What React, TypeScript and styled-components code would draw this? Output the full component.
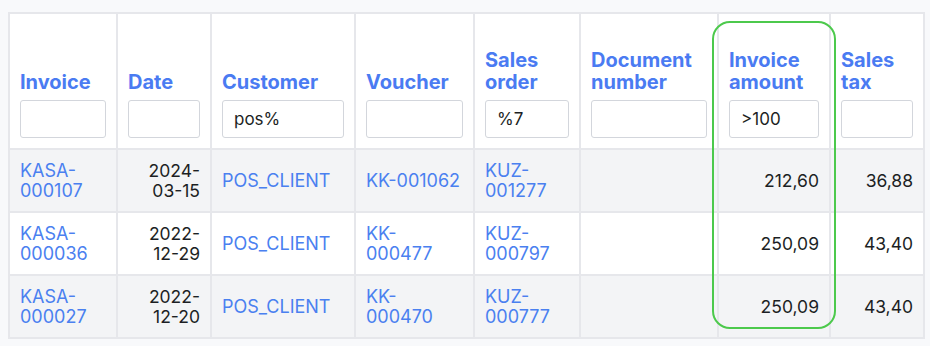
import styled, { createGlobalStyle } from 'styled-components';

const GlobalStyle = createGlobalStyle`
  * { box-sizing: border-box; }
  body {
    margin: 0;
    background: #f8f9fb;
    font-family: Inter, "Noto Sans", sans-serif;
    color: #1c1f24;
  }
`;

const Wrap = styled.div`
  position: relative;
  padding: 12px 0 0 8px;
`;

const Table = styled.table`
  border-collapse: separate;
  border-spacing: 2px;
  background: #e6e7eb;
  table-layout: fixed;
  width: 917px;
`;

const Th = styled.th`
  background: #fff;
  height: 134px;
  padding: 0 10px 10px;
  vertical-align: bottom;
  text-align: left;
  font-weight: normal;
`;

const Label = styled.div`
  color: #4a7bf2;
  font-size: 20px;
  font-weight: 700;
  line-height: 22px;
  margin-bottom: 7px;
`;

const Filter = styled.input`
  display: block;
  width: 100%;
  height: 38px;
  border: 1px solid #d3d6dc;
  border-radius: 3px;
  background: #fff;
  padding: 0 11px;
  font-family: inherit;
  font-size: 17px;
  color: #1c1f24;
  outline: none;
`;

const Row = styled.tr<{ $shaded: boolean }>`
  height: 61px;
  background: ${(p) => (p.$shaded ? '#f3f4f6' : '#ffffff')};
`;

const Td = styled.td<{ $right?: boolean }>`
  padding: 0 10px;
  vertical-align: middle;
  text-align: ${(p) => (p.$right ? 'right' : 'left')};
  font-size: 17.5px;
  line-height: 20px;
  white-space: nowrap;
`;

const Link = styled.a`
  color: #4a80f0;
  font-size: 18px;
  text-decoration: none;
  cursor: pointer;
`;

const Highlight = styled.div`
  position: absolute;
  left: 712px;
  top: 21px;
  width: 124px;
  height: 308px;
  border: 2px solid #4cc94c;
  border-radius: 18px;
  pointer-events: none;
`;

type Col = { key: string; label: string[]; width: number; filter: string; right?: boolean; link?: boolean };

const columns: Col[] = [
  { key: 'invoice', label: ['Invoice'], width: 106, filter: '', link: true },
  { key: 'date', label: ['Date'], width: 92, filter: '', right: true },
  { key: 'customer', label: ['Customer'], width: 142, filter: 'pos%', link: true },
  { key: 'voucher', label: ['Voucher'], width: 117, filter: '', link: true },
  { key: 'order', label: ['Sales', 'order'], width: 104, filter: '%7', link: true },
  { key: 'doc', label: ['Document', 'number'], width: 136, filter: '' },
  { key: 'amount', label: ['Invoice', 'amount'], width: 110, filter: '>100', right: true },
  { key: 'tax', label: ['Sales', 'tax'], width: 92, filter: '', right: true },
];

const rows: Record<string, string[]>[] = [
  {
    invoice: ['KASA-', '000107'],
    date: ['2024-', '03-15'],
    customer: ['POS_CLIENT'],
    voucher: ['KK-001062'],
    order: ['KUZ-', '001277'],
    doc: [],
    amount: ['212,60'],
    tax: ['36,88'],
  },
  {
    invoice: ['KASA-', '000036'],
    date: ['2022-', '12-29'],
    customer: ['POS_CLIENT'],
    voucher: ['KK-', '000477'],
    order: ['KUZ-', '000797'],
    doc: [],
    amount: ['250,09'],
    tax: ['43,40'],
  },
  {
    invoice: ['KASA-', '000027'],
    date: ['2022-', '12-20'],
    customer: ['POS_CLIENT'],
    voucher: ['KK-', '000470'],
    order: ['KUZ-', '000777'],
    doc: [],
    amount: ['250,09'],
    tax: ['43,40'],
  },
];

function Lines({ parts }: { parts: string[] }) {
  return (
    <>
      {parts.map((p, i) => (
        <span key={i}>
          {i > 0 && <br />}
          {p}
        </span>
      ))}
    </>
  );
}

export default function App() {
  return (
    <>
      <GlobalStyle />
      <Wrap>
        <Table>
          <colgroup>
            {columns.map((c) => (
              <col key={c.key} style={{ width: c.width }} />
            ))}
          </colgroup>
          <thead>
            <tr>
              {columns.map((c) => (
                <Th key={c.key}>
                  <Label>
                    <Lines parts={c.label} />
                  </Label>
                  <Filter defaultValue={c.filter} />
                </Th>
              ))}
            </tr>
          </thead>
          <tbody>
            {rows.map((r, i) => (
              <Row key={i} $shaded={i % 2 === 0}>
                {columns.map((c) => (
                  <Td key={c.key} $right={c.right}>
                    {c.link ? (
                      <Link>
                        <Lines parts={r[c.key]} />
                      </Link>
                    ) : (
                      <Lines parts={r[c.key]} />
                    )}
                  </Td>
                ))}
              </Row>
            ))}
          </tbody>
        </Table>
        <Highlight />
      </Wrap>
    </>
  );
}
